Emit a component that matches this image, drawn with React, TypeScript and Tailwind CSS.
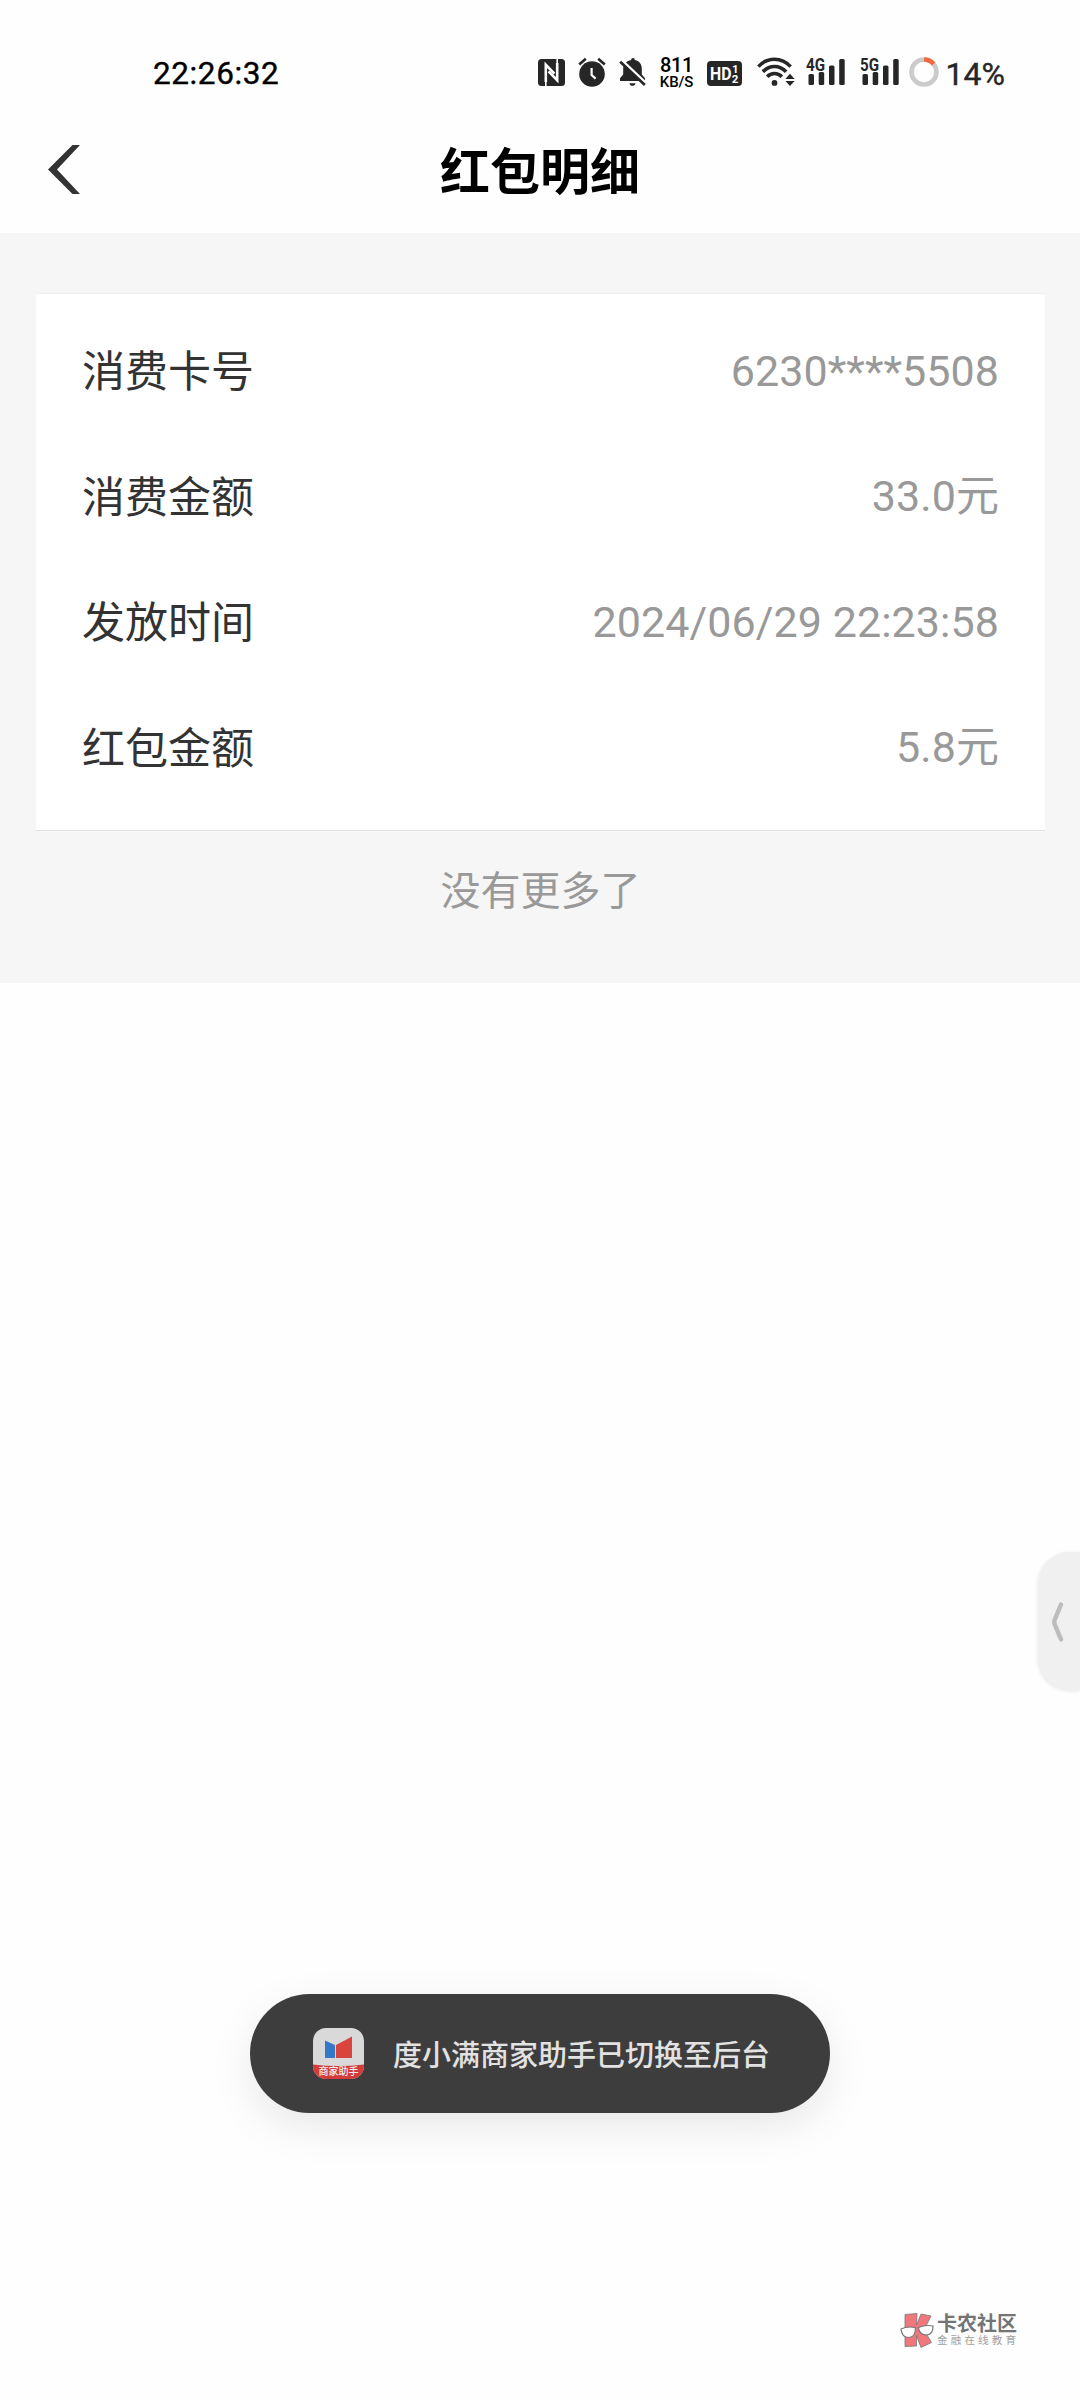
import type { CSSProperties } from "react";

const pageStyle: CSSProperties = {
  fontFamily: 'Roboto, "Noto Sans CJK SC", sans-serif',
};

interface DetailRow {
  label: string;
  value: string;
}

const rows: DetailRow[] = [
  { label: "消费卡号", value: "6230****5508" },
  { label: "消费金额", value: "33.0元" },
  { label: "发放时间", value: "2024/06/29 22:23:58" },
  { label: "红包金额", value: "5.8元" },
];

function NfcIcon() {
  return (
    <svg width="27" height="27" viewBox="0 0 27 27" className="shrink-0">
      <rect width="27" height="27" rx="3.5" fill="#262626" />
      <path d="M7.8 23V5.8L16.4 14.600" fill="none" stroke="#fff" strokeWidth="2.600" />
      <path d="M19.200 4v17.200L10.600 12.400" fill="none" stroke="#fff" strokeWidth="2.600" />
      <path d="M7.800 22v5M19.200 0v5" stroke="#fff" strokeWidth="1.600" />
    </svg>
  );
}

function AlarmIcon() {
  return (
    <svg width="28" height="30" viewBox="0 0 28 30" className="shrink-0">
      <circle cx="14" cy="17" r="12.8" fill="#262626" />
      <path d="M1.2 7.6 7.8 1.8M26.8 7.6 20.2 1.8" stroke="#262626" strokeWidth="2.6" />
      <path d="M13.6 11v7l4 3.6" fill="none" stroke="#fff" strokeWidth="2.2" />
    </svg>
  );
}

function MutedBellIcon() {
  return (
    <svg width="28" height="30" viewBox="0 0 28 30" className="shrink-0">
      <path
        d="M14 1c1.2 0 1.8.9 1.8 2 4.6.9 7 4.3 7 8.7v5.8l3.2 3.8V24H1v-2.700l3.200-3.800v-5.800C4.200 7.300 7.600 3.900 12.200 3c0-1.100.6-2 1.800-2Z"
        fill="#262626"
      />
      <path d="M10.5 26.2h6c-.3 1.800-1.500 2.600-3 2.600s-2.700-.8-3-2.600Z" fill="#262626" />
      <path d="M2.800 3.300 28 27" stroke="#fff" strokeWidth="2.600" />
      <path d="M1.200 4.800 25.800 28" stroke="#262626" strokeWidth="2.600" />
    </svg>
  );
}

function HdIcon() {
  return (
    <svg width="35" height="25" viewBox="0 0 35 25" className="shrink-0">
      <rect width="35" height="25" rx="4" fill="#262626" />
      <g fill="#fff" fontFamily="Roboto, sans-serif" fontWeight="700">
        <text x="3" y="19.3" fontSize="19" textLength="21.5" lengthAdjust="spacingAndGlyphs">
          HD
        </text>
        <text x="25" y="12.300" fontSize="11.5">
          1
        </text>
        <text x="24.800" y="22.300" fontSize="11.5">
          2
        </text>
      </g>
    </svg>
  );
}

function WifiIcon() {
  return (
    <svg width="38" height="30" viewBox="0 0 38 30" className="shrink-0">
      <g fill="none" stroke="#262626" strokeWidth="3.6">
        <path d="M1.4 9.600C10.5-.3 24.500-.3 33.600 9.600" />
        <path d="M5.900 14.800c6.600-7 16.600-7 23.200 0" />
        <path d="M10.200 19.700c4.200-4.300 10.400-4.300 14.600 0" />
      </g>
      <circle cx="17.500" cy="25.900" r="2.900" fill="#262626" />
      <path d="m33 16.700 4.600 5.300h-9.200ZM33 29l4.600-5h-9.200Z" fill="#262626" />
    </svg>
  );
}

function SignalIcon({ label }: { label: string }) {
  return (
    <svg width="41" height="42" viewBox="0 -6 41 42" className="shrink-0">
      <g fill="#262626">
        <rect x="3.500" y="17" width="5.500" height="11" rx="1.500" />
        <rect x="13.700" y="15" width="5.500" height="13" rx="1.500" />
        <rect x="24" y="8.500" width="5.500" height="19.500" rx="1.500" />
        <rect x="34.200" y="2" width="5.500" height="26" rx="1.500" />
      </g>
      <text
        x="1"
        y="13.500"
        fontSize="17.500"
        fontWeight="700"
        fontFamily="Roboto, sans-serif"
        textLength="19"
        lengthAdjust="spacingAndGlyphs"
        fill="#262626"
        stroke="#fff"
        strokeWidth="2"
        paintOrder="stroke"
      >
        {label}
      </text>
    </svg>
  );
}

function BatteryRing() {
  return (
    <svg width="30" height="30" viewBox="0 0 30 30" className="shrink-0">
      <circle cx="15" cy="15" r="12.500" fill="none" stroke="#cbcbcb" strokeWidth="4.600" />
      <path d="M15 2.500A12.500 12.500 0 0 1 24.600 7" fill="none" stroke="#f0693f" strokeWidth="4.600" />
    </svg>
  );
}

function StatusBar() {
  return (
    <header className="flex h-36 items-center justify-between pr-[75px] pl-[153px]">
      <time className="pt-[3px] text-[31.500px] tracking-[0.600px] text-black [-webkit-text-stroke:0.400px_black]">
        22:26:32
      </time>

      <div className="flex items-center">
        <NfcIcon />
        <div className="ml-[13px] flex">
          <AlarmIcon />
        </div>
        <div className="ml-[13px] flex">
          <MutedBellIcon />
        </div>
        <div className="ml-[12px] flex w-[36px] flex-col items-center pt-[3px] font-medium text-black">
          <span className="text-[20px] leading-[17px] tracking-[-0.300px]">811</span>
          <span className="text-[15px] leading-[16px] tracking-[-0.100px]">KB/S</span>
        </div>
        <div className="ml-[12px] flex pt-[2px]">
          <HdIcon />
        </div>
        <div className="ml-[15px] flex">
          <WifiIcon />
        </div>
        <div className="ml-[10px] flex">
          <SignalIcon label="4G" />
        </div>
        <div className="ml-[13px] flex">
          <SignalIcon label="5G" />
        </div>
        <div className="ml-[9px] flex">
          <BatteryRing />
        </div>
        <span className="ml-[7px] pt-[3px] text-[32px] text-[#262626] [-webkit-text-stroke:0.400px_#262626]">
          14%
        </span>
      </div>
    </header>
  );
}

function TitleBar() {
  return (
    <nav className="flex h-[89px] items-start px-12">
      <button type="button" aria-label="返回" className="w-24 pt-px">
        <svg width="33" height="49" viewBox="0 0 33 49">
          <path d="M24.500 0H32L9 24.500 32 49h-7.500L0 24.500Z" fill="#333" />
        </svg>
      </button>
      <h1 className="flex-1 pt-[2px] text-center text-[50px] leading-[54px] font-bold text-black">
        红包明细
      </h1>
      <div className="w-24" />
    </nav>
  );
}

function DetailCard() {
  return (
    <dl className="border-t border-b border-t-[#efefef] border-b-[#e2e2e2] bg-white px-[46px] pt-[14px] pb-[20px]">
      {rows.map((row) => (
        <div key={row.label} className="flex h-[125.500px] items-center justify-between text-[43px]">
          <dt className="pt-[3px] text-[#333]">{row.label}</dt>
          <dd className="tracking-[0.060px] text-[#999]">{row.value}</dd>
        </div>
      ))}
    </dl>
  );
}

function SideHandle() {
  return (
    <div className="absolute top-[1552px] right-0 flex h-[138px] w-[42px] items-center rounded-l-[32px] bg-[#f0f0f0] pt-px pl-[14px] shadow-[0_1px_4px_rgba(0,0,0,0.1)]">
      <svg width="12" height="42" viewBox="0 0 12 42">
        <path
          d="M9 3.500 2.800 18.500q-1 2.500 0 5L9 38.500"
          fill="none"
          stroke="#bdbdbd"
          strokeWidth="4.500"
          strokeLinecap="round"
        />
      </svg>
    </div>
  );
}

function AppIcon() {
  return (
    <svg width="51" height="51" viewBox="0 0 51 51" className="shrink-0">
      <defs>
        <clipPath id="app-icon">
          <rect width="51" height="51" rx="13" />
        </clipPath>
      </defs>
      <g clipPath="url(#app-icon)">
        <rect width="51" height="51" fill="#d9d9d9" />
        <path d="M12 12.500 22 17v13H12Z" fill="#3478c8" />
        <path d="M23 17 39 8.500V30H23Z" fill="#d9453c" />
        <path d="M0 36.500q25.500 3 51 0V51H0Z" fill="#d33c3a" />
        <text
          x="25.500"
          y="47.300"
          fontSize="10"
          fontWeight="500"
          textAnchor="middle"
          fill="#eee"
          fontFamily='"Noto Sans CJK SC", sans-serif'
        >
          商家助手
        </text>
      </g>
    </svg>
  );
}

function Toast() {
  return (
    <div className="absolute top-[1994px] left-[250px] flex h-[119px] w-[580px] items-center rounded-full bg-[#3d3d3d] pl-[63px] shadow-[0_14px_44px_rgba(0,0,0,0.09)]">
      <AppIcon />
      <p className="ml-[29px] pt-[6px] text-[29px] font-medium whitespace-nowrap text-[#e2e2e2]">
        度小满商家助手已切换至后台
      </p>
    </div>
  );
}

function Watermark() {
  return (
    <div className="absolute top-[2311px] left-[899px] flex items-start">
      <svg width="36" height="38" viewBox="0 0 36 38">
        <path
          d="M6 3.500 18 2.500 17.500 14 22 3l10 2-7 14 7.500 12.500-10.500 5-4.500-12V35L6 35.500Z"
          fill="#f0787c"
          stroke="#777"
          strokeWidth="0.800"
        />
        <g fill="#fff" stroke="#777" strokeWidth="1.200">
          <path d="M2 18q6-3 14.500-1.500c0 6-2.500 10-6.500 10S2.500 24 2 18Z" />
          <path d="M19.500 16.500Q27 13.500 34 15c0 5-2 9-6.500 9s-8-3-8-7.500Z" />
        </g>
      </svg>
      <div className="ml-[2px] flex flex-col whitespace-nowrap">
        <span className="mt-[2px] text-[20px] leading-[22px] font-bold text-[#747474]">卡农社区</span>
        <span className="text-[10.500px] leading-[12px] tracking-[3.200px] text-[#a0a0a0]">
          金融在线教育
        </span>
      </div>
    </div>
  );
}

export default function App() {
  return (
    <div className="relative h-[2400px] w-[1080px] overflow-hidden bg-[#fefefe]" style={pageStyle}>
      <StatusBar />
      <TitleBar />
      <main className="h-[750px] bg-[#f6f6f6] pt-[60px] pr-[35px] pl-[36px]">
        <DetailCard />
        <p className="mt-[31px] text-center text-[40px] leading-[60px] text-[#999]">没有更多了</p>
      </main>
      <SideHandle />
      <Toast />
      <Watermark />
    </div>
  );
}
